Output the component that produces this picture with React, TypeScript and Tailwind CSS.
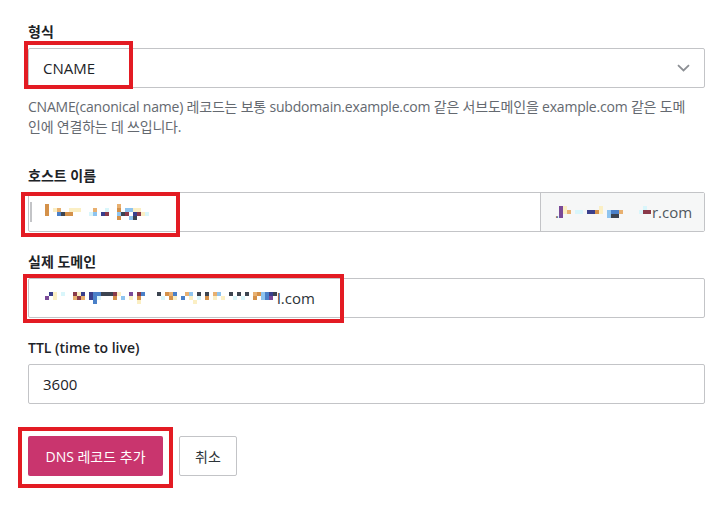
import React from "react";

const PAL: Record<string, string> = {
  o: "#d4914a",
  y: "#fbefc4",
  c: "#d9f6fb",
  b: "#8ec4ef",
  B: "#4a80c8",
  d: "#3c4450",
  n: "#3a3f8c",
  m: "#8a3a4a",
  p: "#7a4a98",
  t: "#e8b070",
  g: "#6b6f7a",
};

function Pixels({ rows, cell = 4 }: { rows: string[]; cell?: number }) {
  const w = Math.max(...rows.map((r) => r.length)) * cell;
  const h = rows.length * cell;
  const rects: React.ReactNode[] = [];
  rows.forEach((r, yi) =>
    r.split("").forEach((ch, xi) => {
      if (PAL[ch])
        rects.push(
          <rect key={`${yi}-${xi}`} x={xi * cell} y={yi * cell} width={cell} height={cell} fill={PAL[ch]} />
        );
    })
  );
  return (
    <svg width={w} height={h} viewBox={`0 0 ${w} ${h}`} className="block shrink-0" shapeRendering="crispEdges">
      {rects}
    </svg>
  );
}

const font = { fontFamily: '"Open Sans", "Noto Sans CJK KR", sans-serif' };

export default function App() {
  return (
    <div className="relative w-[724px] h-[517px] bg-white pl-[28px] pr-[19px] pt-[22px] text-[#1d2327]" style={font}>
      {/* 형식 */}
      <div className="h-5 leading-5 text-[14px] font-semibold mb-[6px]">형식</div>
      <div className="h-[40px] border border-[#c3c4c7] rounded-[2px] flex items-center justify-between pl-[14px] pr-[14px]">
        <span className="text-[15px]">CNAME</span>
        <svg width="13" height="8" viewBox="0 0 13 8" fill="none">
          <path d="M1 1.2 L6.5 6.5 L12 1.2" stroke="#8c8f94" strokeWidth="1.8" />
        </svg>
      </div>
      <div className="mt-[9px] text-[14px] leading-5 text-[#646970]">
        <div className="whitespace-nowrap tracking-[-0.2px]">
          CNAME(canonical name) 레코드는 보통 subdomain.example.com 같은 서브도메인을 example.com 같은 도메
        </div>
        <div className="whitespace-nowrap tracking-[-0.2px]">인에 연결하는 데 쓰입니다.</div>
      </div>

      {/* 호스트 이름 */}
      <div className="mt-[29px] h-5 leading-5 text-[14px] font-semibold mb-[6px]">호스트 이름</div>
      <div className="h-[40px] flex border border-[#c3c4c7] rounded-[2px]">
        <div className="flex-1 flex items-center pl-[1px]">
          <div className="w-[2px] h-[20px] bg-[#c3c4c7]" />
          <div className="ml-[13px]">
            <Pixels
              rows={[
                "o.................t.......",
                "o.yt..yyy...t..c..o.bbyy..",
                "o..Bdoo....cb.nm..bdm.nmyc",
                "..................o..bd...",
              ]}
            />
          </div>
        </div>
        <div className="w-[164px] bg-[#f6f7f7] border-l border-[#c3c4c7] flex items-center pl-[14px] text-[15px] text-[#50575e]">
          <span>.</span>
          <Pixels
            rows={[
              "py........y..........c.",
              "pyt.cc.nnoy.bBBt....cmm",
              "p...........bdd........",
            ]}
          />
          <span className="ml-[1px]">r.com</span>
        </div>
      </div>

      {/* 실제 도메인 */}
      <div className="mt-[20px] h-5 leading-5 text-[14px] font-semibold mb-[6px]">실제 도메인</div>
      <div className="h-[40px] border border-[#c3c4c7] rounded-[2px] flex items-center pl-[16px] text-[15px]">
        <Pixels
          rows={[
            ".ny.c..myn.nBBdddmy..p.mB...d.otB..tb.d.d.tb..d.d.d.tobBnd",
            "p.y....tmt.nBc...o.b.y.o.....c.oy.B.y.c.o.y.y..c.c..o.bBp.",
            "............B..........y.............y....................",
          ]}
        />
        <span className="text-[#2c3338]">l.com</span>
      </div>

      {/* TTL */}
      <div className="mt-[20px] h-5 leading-5 text-[14px] font-semibold mb-[6px]">TTL (time to live)</div>
      <div className="h-[40px] border border-[#c3c4c7] rounded-[2px] flex items-center pl-[14px] text-[15px]">
        3600
      </div>

      {/* buttons */}
      <div className="mt-[32px] flex gap-4">
        <button className="h-[40px] w-[135px] rounded-[2px] bg-[#c9356e] text-white text-[14px]">DNS 레코드 추가</button>
        <button className="h-[40px] w-[58px] rounded-[2px] bg-white border border-[#c3c4c7] text-[14px] text-[#2c3338]">
          취소
        </button>
      </div>

      {/* red highlight overlays */}
      <div className="absolute left-[24px] top-[41px] w-[109px] h-[48px] border-4 border-[#e31b23]" />
      <div className="absolute left-[21px] top-[192px] w-[159px] h-[45px] border-4 border-[#e31b23]" />
      <div className="absolute left-[23px] top-[274px] w-[321px] h-[49px] border-4 border-[#e31b23]" />
      <div className="absolute left-[18px] top-[427px] w-[155px] h-[61px] border-4 border-[#e31b23]" />
    </div>
  );
}
